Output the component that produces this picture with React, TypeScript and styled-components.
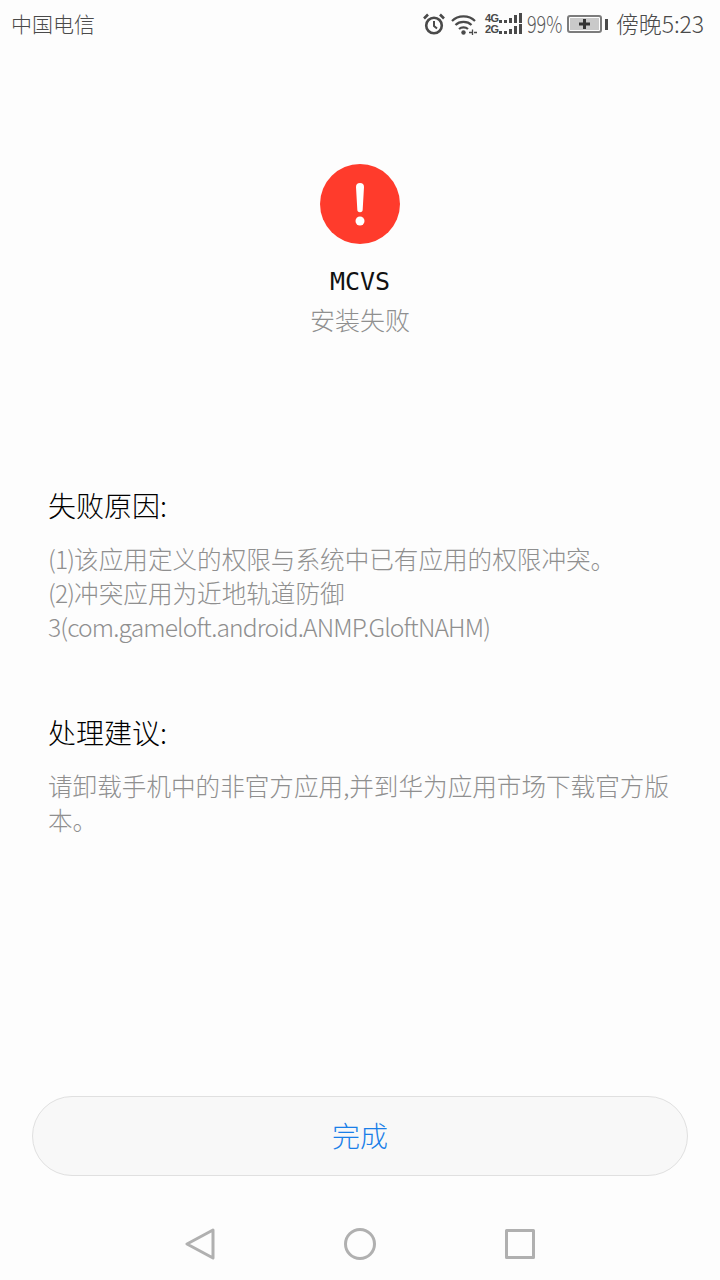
import styled, { createGlobalStyle } from 'styled-components';

const GlobalStyle = createGlobalStyle`
  html, body {
    margin: 0;
    padding: 0;
    background: #fdfdfd;
  }
`;

const FONT = `"Noto Sans CJK SC", "Noto Sans", sans-serif`;

const SignalBars = () => (
  <svg width="24" height="11" viewBox="0 0 24 11" fill="#4a4a4a">
    <rect x="0" y="7" width="3" height="3" />
    <rect x="5" y="7" width="3" height="3" />
    <rect x="10" y="5" width="3" height="5" />
    <rect x="15" y="2" width="3" height="8" />
    <rect x="20" y="0" width="3" height="10" />
  </svg>
);

const App = () => {
  return (
    <Page>
      <GlobalStyle />
      <StatusBar>
        <Carrier>中国电信</Carrier>
        <StatusRight>
          <svg width="22" height="22" viewBox="0 0 22 22" fill="none" stroke="#4a4a4a">
            <circle cx="11" cy="12.500" r="7.800" strokeWidth="2.600" />
            <path d="M11 8v5l3 2.500" strokeWidth="2" />
            <path d="M1 5.500 5 1.500M21 5.500 17 1.500" strokeWidth="2.600" />
          </svg>
          <WifiIcon width="26" height="21" viewBox="0 0 26 21" fill="none" stroke="#4a4a4a" strokeWidth="2.200">
            <path d="M1 7C7 .8 18 .8 24 7" />
            <path d="M4.500 11C8.500 6.800 16.500 6.800 20.500 11" />
            <path d="M8 15C10.500 12.800 14.500 12.800 17 15" />
            <circle cx="12.500" cy="18.500" r="2.200" fill="#4a4a4a" stroke="none" />
            <path d="M18 18.500h3M23 18.500h3M21.500 15.500v6" strokeWidth="1.300" />
          </WifiIcon>
          <Signal>
            <SignalRow>
              <SignalLabel>4G</SignalLabel>
              <SignalBars />
            </SignalRow>
            <SignalRow>
              <SignalLabel>2G</SignalLabel>
              <SignalBars />
            </SignalRow>
          </Signal>
          <Percent>99%</Percent>
          <Battery>
            <BatteryBody>
              <svg width="13" height="12" viewBox="0 0 13 12">
                <path d="M1 6h11M6.500 1v10" stroke="#333" strokeWidth="3" />
              </svg>
            </BatteryBody>
            <BatteryCap />
          </Battery>
          <Time>傍晚5:23</Time>
        </StatusRight>
      </StatusBar>

      <Header>
        <AlertBadge>
          <svg width="80" height="80" viewBox="0 0 80 80">
            <path d="M36 23a4 4 0 0 1 8 0l-1.300 22.500a2.700 2.700 0 0 1-5.400 0z" fill="#fff" />
            <circle cx="40" cy="57" r="4.500" fill="#fff" />
          </svg>
        </AlertBadge>
        <AppName>MCVS</AppName>
        <InstallStatus>安装失败</InstallStatus>
      </Header>

      <Section $top={148}>
        <SectionTitle>失败原因:</SectionTitle>
        <SectionBody>
          <Latin>(1)</Latin>该应用定义的权限与系统中已有应用的权限冲突。
          <br />
          <Latin>(2)</Latin>冲突应用为近地轨道防御
          <br />
          <Latin>3(com.gameloft.android.ANMP.GloftNAHM)</Latin>
        </SectionBody>
      </Section>

      <Section $top={70}>
        <SectionTitle>处理建议:</SectionTitle>
        <SectionBody>请卸载手机中的非官方应用,并到华为应用市场下载官方版本。</SectionBody>
      </Section>

      <Footer>
        <DoneButton>完成</DoneButton>
        <NavBar>
          <svg width="30" height="32" viewBox="0 0 30 32" fill="none" stroke="#b0b0b0" strokeWidth="3" strokeLinejoin="round">
            <path d="M28 2 2 16l26 14z" />
          </svg>
          <svg width="32" height="32" viewBox="0 0 32 32" fill="none" stroke="#b0b0b0" strokeWidth="3">
            <circle cx="16" cy="16" r="14.500" />
          </svg>
          <svg width="30" height="32" viewBox="0 0 30 32" fill="none" stroke="#b0b0b0" strokeWidth="3" strokeLinejoin="round">
            <rect x="1.500" y="2.500" width="27" height="27" />
          </svg>
        </NavBar>
      </Footer>
    </Page>
  );
};

export default App;

const Page = styled.div`
  width: 720px;
  height: 1280px;
  display: flex;
  flex-direction: column;
  background: #fdfdfd;
  font-family: ${FONT};
  font-weight: 300;
  overflow: hidden;
`;

const Latin = styled.span`
  letter-spacing: -0.85px;
`;

const StatusBar = styled.div`
  height: 48px;
  padding: 0 16px 2px 11px;
  display: flex;
  align-items: center;
  justify-content: space-between;
  color: #4a4a4a;
`;

const Carrier = styled.div`
  margin-top: -2px;
  font-size: 21px;
`;

const StatusRight = styled.div`
  display: flex;
  align-items: center;
`;

const WifiIcon = styled.svg`
  margin-left: 6px;
`;

const Signal = styled.div`
  margin-left: 8px;
  display: flex;
  flex-direction: column;
`;

const SignalRow = styled.div`
  display: flex;
  align-items: center;
  gap: 3px;
  height: 11px;
`;

const SignalLabel = styled.span`
  font-family: 'Liberation Sans', sans-serif;
  font-size: 11px;
  line-height: 11px;
  letter-spacing: -0.5px;
  width: 11px;
  font-weight: 700;
  color: #4a4a4a;
`;

const Percent = styled.span`
  margin-left: 4px;
  width: 34px;
  font-size: 23px;
  margin-top: -2px;
  white-space: nowrap;
  transform: scaleX(0.78);
  transform-origin: left center;
  color: #5a5a5a;
`;

const Battery = styled.div`
  margin-left: 6px;
  display: flex;
  align-items: center;
  gap: 3px;
`;

const BatteryBody = styled.div`
  width: 35px;
  height: 18px;
  box-sizing: border-box;
  border: 2px solid #7c7c7c;
  outline: 1px solid #fdfdfd;
  outline-offset: -3px;
  border-radius: 3px;
  background: #c9c9c9;
  display: flex;
  align-items: center;
  justify-content: center;
`;

const BatteryCap = styled.div`
  width: 3px;
  height: 11px;
  background: #4a4a4a;
`;

const Time = styled.span`
  margin-left: 8px;
  margin-top: -2px;
  font-size: 23px;
  letter-spacing: -0.1px;
  color: #4a4a4a;
`;

const Header = styled.div`
  margin-top: 114px;
  display: flex;
  flex-direction: column;
  align-items: center;
`;

const AlertBadge = styled.div`
  width: 80px;
  height: 80px;
  border-radius: 50%;
  background: #ff3b2c;
`;

const AppName = styled.div`
  margin-top: 19px;
  font-family: 'DejaVu Sans Mono', monospace;
  font-size: 25px;
  font-weight: 400;
  line-height: 38px;
  color: #111;
`;

const InstallStatus = styled.div`
  font-size: 25px;
  line-height: 37px;
  color: #8f8f8f;
`;

const Section = styled.div<{ $top: number }>`
  margin-top: ${(p) => p.$top}px;
  padding: 0 48px;
`;

const SectionTitle = styled.div`
  font-size: 28px;
  line-height: 38px;
  color: #000;
`;

const SectionBody = styled.div`
  margin-top: 17px;
  font-size: 24.6px;
  line-height: 34px;
  color: #8f8f8f;
`;

const Footer = styled.div`
  margin-top: auto;
  padding: 0 32px 20px;
  display: flex;
  flex-direction: column;
`;

const DoneButton = styled.div`
  height: 80px;
  box-sizing: border-box;
  padding-bottom: 3px;
  border: 1px solid #e0e0e0;
  border-radius: 40px;
  background: #f8f8f8;
  display: flex;
  align-items: center;
  justify-content: center;
  font-size: 28px;
  color: #1a7fe8;
`;

const NavBar = styled.div`
  margin-top: 52px;
  height: 32px;
  padding: 0 153px;
  display: flex;
  align-items: center;
  justify-content: space-between;
`;
